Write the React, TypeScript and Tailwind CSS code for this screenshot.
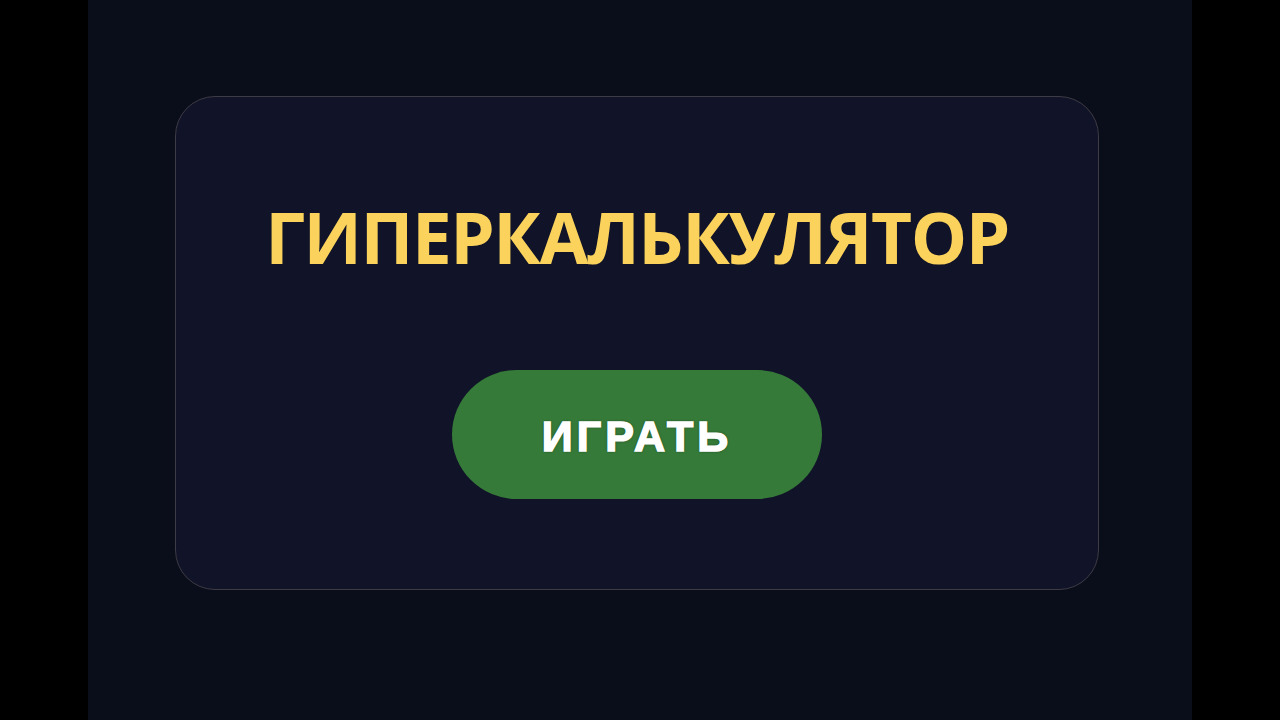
export default function App() {
  return (
    <div className="w-[1280px] h-[720px] bg-black flex justify-center overflow-hidden">
      <div className="w-[1104px] h-full bg-[#0a0d1a] flex flex-col items-center pt-[96px]">
        <div className="w-[924px] h-[494px] mr-[6px] rounded-[40px] border border-[#3d3b43] bg-[#111329] flex flex-col items-center">
          <h1
            className="mt-[100px] text-[#fbd35c] font-bold text-[71px] leading-[80px] tracking-[-1.5px]"
            style={{ fontFamily: '"Open Sans", "Noto Sans", sans-serif' }}
          >
            ГИПЕРКАЛЬКУЛЯТОР
          </h1>
          <button
            className="mt-[93px] w-[370px] h-[129px] pt-[3px] rounded-full bg-[#357a38] text-white text-[43px] font-black tracking-[4px] [-webkit-text-stroke:1.5px_white] [text-shadow:0_0_3px_rgba(0,0,0,0.6)]"
            style={{ fontFamily: '"Liberation Sans", Arial, sans-serif' }}
          >
            ИГРАТЬ
          </button>
        </div>
      </div>
    </div>
  );
}
